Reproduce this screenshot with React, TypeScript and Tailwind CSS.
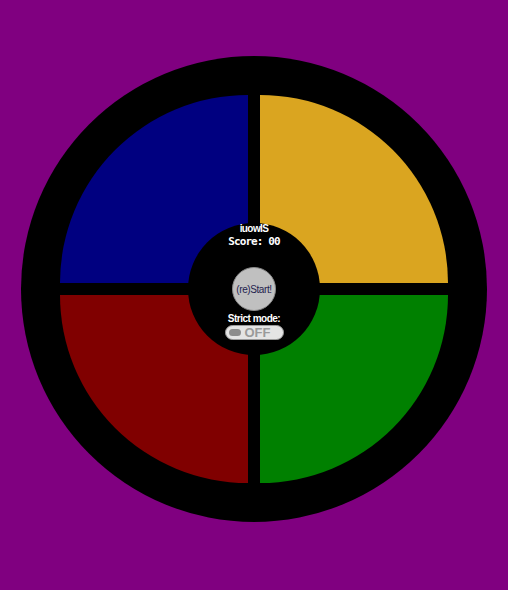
const Pad = ({ className }: { className: string }) => (
    <div className={`w-[188px] h-[188px] cursor-pointer ${className}`} />
)

const App = () => {
    return (
        <div className="w-full h-[590px] bg-[#800080] flex justify-center pt-[56px] font-['Liberation_Sans',Arial,sans-serif]">
            <div className="relative w-[466px] h-[466px] rounded-full bg-black p-[39px]">
                <div className="grid grid-cols-2 gap-[12px]">
                    <Pad className="bg-[#000080] rounded-tl-full" />
                    <Pad className="bg-[#daa520] rounded-tr-full" />
                    <Pad className="bg-[#800000] rounded-bl-full" />
                    <Pad className="bg-[#008000] rounded-br-full" />
                </div>

                <div className="absolute left-[167px] top-[167px] w-[132px] h-[132px] rounded-full bg-black flex flex-col items-center">
                    <div className="text-white text-[10px] font-bold leading-[13px] tracking-[-0.6px] mt-[-1px]">iuowIS</div>
                    <div className="text-white text-[11px] font-bold leading-[14px] tracking-[-0.9px] font-['DejaVu_Sans_Mono',monospace]">
                        Score: 00
                    </div>
                    <button className="mt-[18px] w-[44px] h-[44px] rounded-full bg-[#c0c0c0] border border-[#8a8a8a] text-[10px] tracking-[-0.4px] text-[#23234f] flex items-center justify-center">
                        (re)Start!
                    </button>
                    <div className="text-white text-[10px] font-bold leading-[13px] tracking-[-0.5px] mt-[1px]">Strict mode:</div>
                    <div className="w-[59px] h-[15px] rounded-full bg-[#e4e4e4] border border-[#9a9a9a] flex items-center pl-[3px] gap-[4px]">
                        <span className="w-[12px] h-[7px] rounded-full bg-[#8c8c8c]" />
                        <span className="text-[13px] font-bold leading-none text-[#9a9a9a]">OFF</span>
                    </div>
                </div>
            </div>
        </div>
    )
}

export default App
